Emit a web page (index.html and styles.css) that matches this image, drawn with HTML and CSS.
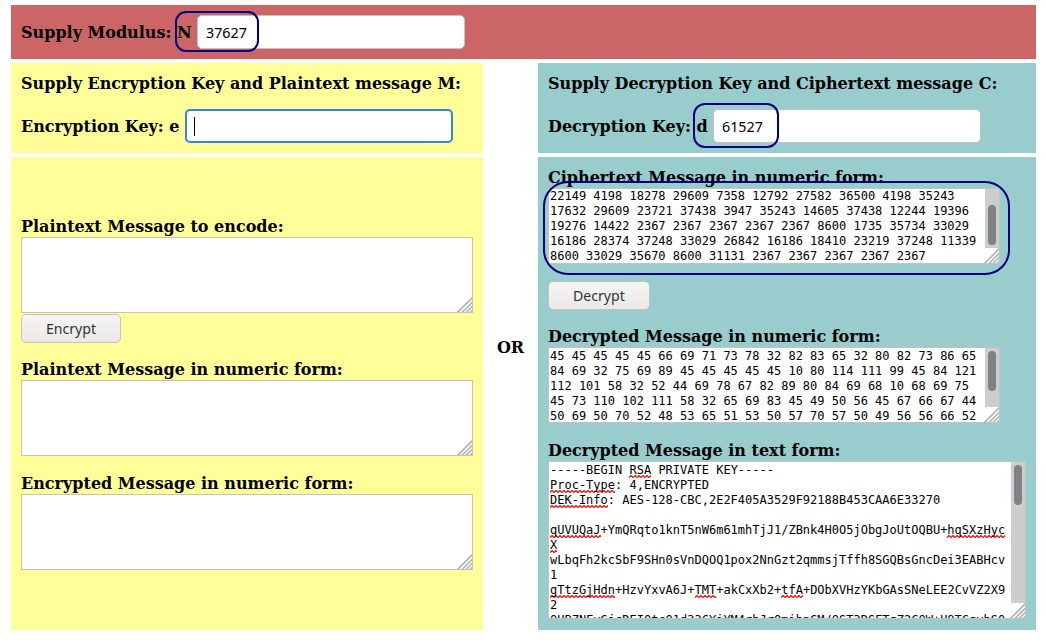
FILE: index.html
```html
<!DOCTYPE html>
<html lang="en">
<head>
<meta charset="utf-8">
<title>RSA Calculator</title>
<link rel="stylesheet" href="styles.css">
</head>
<body>
<main class="grid">
  <section class="cell modulus">
    <div class="field"><label>Supply Modulus: <span class="anchor">N<i class="ring ring-n"></i></span></label><div class="input"><span class="value">37627</span></div></div>
  </section>
  <section class="cell enc keys">
    <h2>Supply Encryption Key and Plaintext message M:</h2>
    <div class="field"><label>Encryption Key: e</label><div class="input focused"><span class="caret"></span></div></div>
  </section>
  <section class="cell dec keys">
    <h2>Supply Decryption Key and Ciphertext message C:</h2>
    <div class="field"><label>Decryption Key: <span class="anchor">d<i class="ring ring-d"></i></span></label><div class="input"><span class="value">61527</span></div></div>
  </section>
  <section class="cell enc messages">
    <h2>Plaintext Message to encode:</h2>
    <div class="area"><svg class="grip" viewBox="0 0 15 15"><path d="M.5 15.5l15-15M5 15.5 15.5 5M9 15.5 15.5 9M13 15.5l2.5-2.5"/></svg></div>
    <div class="button"><span class="caption">Encrypt</span></div>
    <h2 class="spaced">Plaintext Message in numeric form:</h2>
    <div class="area"><svg class="grip" viewBox="0 0 15 15"><path d="M.5 15.5l15-15M5 15.5 15.5 5M9 15.5 15.5 9M13 15.5l2.5-2.5"/></svg></div>
    <h2 class="spaced">Encrypted Message in numeric form:</h2>
    <div class="area"><svg class="grip" viewBox="0 0 15 15"><path d="M.5 15.5l15-15M5 15.5 15.5 5M9 15.5 15.5 9M13 15.5l2.5-2.5"/></svg></div>
  </section>
  <div class="or">OR</div>
  <section class="cell dec messages">
    <h2>Ciphertext Message in numeric form:</h2>
    <div class="anchor">
    <div class="area scrolled"><pre>22149 4198 18278 29609 7358 12792 27582 36500 4198 35243
17632 29609 23721 37438 3947 35243 14605 37438 12244 19396
19276 14422 2367 2367 2367 2367 2367 8600 1735 35734 33029
16186 28374 37248 33029 26842 16186 18410 23219 37248 11339
8600 33029 35670 8600 31131 2367 2367 2367 2367 2367</pre><div class="bar"><i class="thumb low"></i></div><svg class="grip" viewBox="0 0 15 15"><path d="M.5 15.5l15-15M5 15.5 15.5 5M9 15.5 15.5 9M13 15.5l2.5-2.5"/></svg></div>
    <i class="ring ring-text"></i>
    </div>
    <div class="button wide"><span class="caption">Decrypt</span></div>
    <h2 class="spaced">Decrypted Message in numeric form:</h2>
    <div class="area"><pre>45 45 45 45 45 66 69 71 73 78 32 82 83 65 32 80 82 73 86 65
84 69 32 75 69 89 45 45 45 45 45 10 80 114 111 99 45 84 121
112 101 58 32 52 44 69 78 67 82 89 80 84 69 68 10 68 69 75
45 73 110 102 111 58 32 65 69 83 45 49 50 56 45 67 66 67 44
50 69 50 70 52 48 53 65 51 53 50 57 70 57 50 49 56 56 66 52</pre><div class="bar"><i class="thumb"></i></div><svg class="grip" viewBox="0 0 15 15"><path d="M.5 15.5l15-15M5 15.5 15.5 5M9 15.5 15.5 9M13 15.5l2.5-2.5"/></svg></div>
    <h2 class="spaced">Decrypted Message in text form:</h2>
    <div class="area large"><pre>-----BEGIN <u>RSA</u> PRIVATE KEY-----
<u>Proc-Type</u>: 4,ENCRYPTED
<u>DEK-Info</u>: AES-128-CBC,2E2F405A3529F92188B453CAA6E33270

<u>qUVUQaJ</u>+YmQRqto1knT5nW6m61mhTjJ1/ZBnk4H0O5jObgJoUtOQBU+<u>hqSXzHyc</u>
<u>X</u>
wLbqFh2kcSbF9SHn0sVnDQOQ1pox2NnGzt2qmmsjTffh8SGQBsGncDei3EABHcv
1
<u>gTtzGjHdn</u>+HzvYxvA6J+<u>TMT</u>+akCxXb2+<u>tfA</u>+DObXVHzYKbGAsSNeLEE2CvVZ2X9
2
QUBZNFvGjcDEIQtcQ1d33CYiYM4rhJrQmihnCM/QST3DSFTqZ2CQW+U8TCqvhS0</pre><div class="bar"><i class="thumb"></i></div><svg class="grip" viewBox="0 0 15 15"><path d="M.5 15.5l15-15M5 15.5 15.5 5M9 15.5 15.5 9M13 15.5l2.5-2.5"/></svg></div>
  </section>
</main>
</body>
</html>
```
FILE: styles.css
```css
* { box-sizing: border-box; }
body { margin: 0; background: #fff; color: #000; font: bold 16px/21px "DejaVu Serif", serif; }
.grid { display: grid; grid-template-columns: 472px 47px 498px; grid-template-rows: 54px 90px 473px; gap: 4px; padding: 5px 0 0 11px; }
.cell { padding: 10px; min-width: 0; }
.modulus { grid-column: 1 / -1; background: #cc6666; }
.enc { background: #ffff99; grid-column: 1; }
.dec { background: #99cccc; grid-column: 3; }
.keys { grid-row: 2; }
.messages { grid-row: 3; display: flex; flex-direction: column; }
h2 { font: inherit; margin: 0; white-space: nowrap; }
.field { display: flex; align-items: center; gap: 5px; height: 34px; white-space: nowrap; }
.keys .field { margin-top: 15px; }
.input { width: 268px; height: 34px; padding: 0 8px; border: 1px solid #c6c1bc; border-radius: 5px; background: #fff; display: flex; align-items: center; font: 15.2px/20px "Noto Sans", sans-serif; }
.value { display: inline-block; transform: scaleX(0.94); transform-origin: left; }
.focused { border: 2px solid #3584e4; padding: 0 7px; }
.caret { width: 1px; height: 19px; background: #000; }
.anchor { position: relative; }
.ring { position: absolute; border: 2px solid #000080; z-index: 1; }
.ring-n { left: -2px; top: -12px; width: 84px; height: 41px; border-radius: 11px; }
.ring-d { left: -4px; top: -14px; width: 86px; height: 45px; border-radius: 12px; }
.ring-text { left: -5px; top: -7px; width: 467px; height: 94px; border-radius: 25px; }
.enc.messages { padding-top: 59px; }
.area { position: relative; width: 452px; height: 76px; flex: none; border: 1px solid #c6c1bc; background: #fff; overflow: hidden; display: flex; justify-content: space-between; }
.large { width: 478px; height: 158px; }
pre { margin: 0; padding: 1px 0 0 1px; font: 12px/15px "DejaVu Sans Mono", monospace; }
.scrolled pre { padding-top: 0; }
.bar { width: 14px; flex: none; margin-bottom: 15px; background: #cdcdcd; padding: 3px; }
.thumb { display: block; width: 8px; height: 40px; border-radius: 4px; background: #7e8282; }
.low { margin-top: 13px; }
.grip { position: absolute; right: 0; bottom: 0; width: 15px; height: 15px; fill: none; stroke: #b4b4b4; stroke-width: 1.7; }
.button { width: 100px; height: 29px; margin-top: 1px; border: 1px solid #c6c1bc; border-radius: 5px; background: linear-gradient(#f6f5f4, #ebe9e7); color: #2e3436; font: 15.2px/27px "Noto Sans", sans-serif; text-align: center; }
.caption { display: inline-block; transform: scaleX(0.93); }
.wide { width: 102px; margin-top: 17px; }
.button + .spaced { margin-top: 16px; }
.area + .spaced { margin-top: 17px; }
.or { grid-column: 2; grid-row: 2 / 4; align-self: center; text-align: center; padding-top: 2px; }
u { text-decoration: none; padding-bottom: 1px; background: url("data:image/svg+xml,%3Csvg xmlns='http://www.w3.org/2000/svg' width='4' height='3'%3E%3Cpath d='M-1 3.5 2 .5 5 3.5' fill='none' stroke='red' stroke-width='1.2'/%3E%3C/svg%3E") left bottom / 4px 3px repeat-x; }
```
